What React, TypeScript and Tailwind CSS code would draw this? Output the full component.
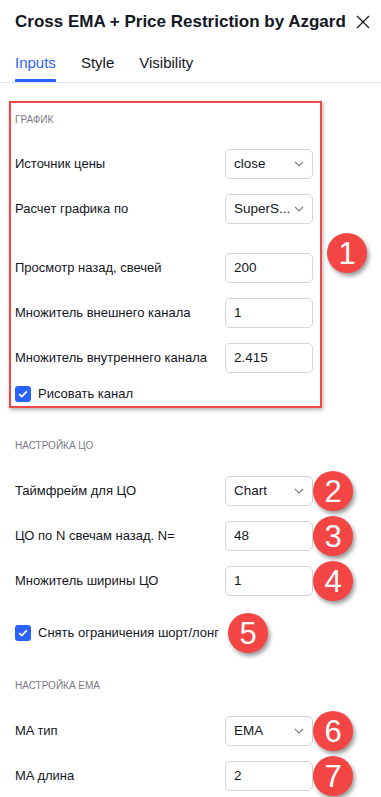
const font = { fontFamily: '"Liberation Sans", Arial, sans-serif' };

function Badge({ n, className }: { n: number; className: string }) {
  return (
    <div
      className={`absolute w-[40px] h-[40px] rounded-full bg-[#f44545] text-white flex items-center justify-center text-[31px] leading-none shadow-[2px_3px_4px_rgba(0,0,0,0.4)] z-10 ${className}`}
    >
      {n}
    </div>
  );
}

function Chevron() {
  return (
    <svg width="10" height="6" viewBox="0 0 10 6" className="text-[#787b86]">
      <path d="M1 1l4 4 4-4" fill="none" stroke="currentColor" strokeWidth="1.1" />
    </svg>
  );
}

function Field({ value, select }: { value: string; select?: boolean }) {
  return (
    <div className="w-[88px] h-[30px] border border-[#d1d4dc] rounded-[5px] flex items-center pl-[8px] pr-[8px] text-[13.5px] text-[#131722] bg-white">
      <span className="flex-1 truncate">{value}</span>
      {select && <Chevron />}
    </div>
  );
}

function Row({
  label,
  value,
  select,
  className = "",
  badge,
}: {
  label: string;
  value: string;
  select?: boolean;
  className?: string;
  badge?: number;
}) {
  return (
    <div className={`relative flex items-center justify-between h-[30px] w-[298px] ${className}`}>
      <span className="text-[13px] text-[#131722]">{label}</span>
      <Field value={value} select={select} />
      {badge && <Badge n={badge} className="left-[298px] top-1/2 -translate-y-1/2" />}
    </div>
  );
}

function Check({ label, className = "" }: { label: string; className?: string }) {
  return (
    <div className={`flex items-center h-[16px] ${className}`}>
      <div className="w-[16px] h-[16px] rounded-[3px] bg-[#2962ff] flex items-center justify-center">
        <svg width="10" height="8" viewBox="0 0 10 8">
          <path d="M1.2 4.2l2.6 2.4L8.8 1.4" fill="none" stroke="white" strokeWidth="1.8" />
        </svg>
      </div>
      <span className="ml-[7px] text-[13px] text-[#131722]">{label}</span>
    </div>
  );
}

function SectionTitle({ text, className = "" }: { text: string; className?: string }) {
  return (
    <div className={`h-[12px] leading-[12px] text-[10px] text-[#787b86] uppercase ${className}`}>
      {text}
    </div>
  );
}

export default function App() {
  return (
    <div className="w-[381px] h-[797px] bg-white overflow-hidden relative" style={font}>
      <div className="px-[15px]">
        <div className="mt-[10px] h-[24px] flex items-center justify-between">
          <h1 className="text-[17px] font-bold text-[#131722]">
            Cross EMA + Price Restriction by Azgard
          </h1>
          <svg width="14" height="14" viewBox="0 0 14 14" className="mr-[-4px]">
            <path d="M1 1l12 12M13 1L1 13" stroke="#131722" strokeWidth="1.2" />
          </svg>
        </div>
        <div className="mt-[10px] flex gap-[25px] h-[38px]">
          <div className="flex flex-col justify-between">
            <span className="text-[15px] text-[#2962ff] pt-[8px]">Inputs</span>
            <div className="h-[3px] bg-[#2962ff] rounded-t-[1px]" />
          </div>
          <span className="text-[15px] text-[#131722] pt-[8px]">Style</span>
          <span className="text-[15px] text-[#131722] pt-[8px]">Visibility</span>
        </div>
      </div>
      <div className="h-px bg-[#e0e3eb]" />

      <div className="px-[15px]">
        <div className="relative mt-[18px] ml-[-6px] w-[313px] border-2 border-[#f04848] pl-[4px] pr-[7px] pt-[11px] pb-[4px] shadow-[1px_2px_4px_rgba(0,0,0,0.3)]">
          <SectionTitle text="График" />
          <Row label="Источник цены" value="close" select className="mt-[23px]" />
          <Row label="Расчет графика по" value="SuperS..." select className="mt-[15px]" />
          <Row label="Просмотр назад, свечей" value="200" className="mt-[29px]" />
          <Row label="Множитель внешнего канала" value="1" className="mt-[15px]" />
          <Row label="Множитель внутреннего канала" value="2.415" className="mt-[15px]" />
          <Check label="Рисовать канал" className="mt-[13px]" />
          <Badge n={1} className="left-[316px] top-[130px]" />
        </div>

        <SectionTitle text="Настройка ЦО" className="mt-[32px]" />
        <Row label="Таймфрейм для ЦО" value="Chart" select className="mt-[24px]" badge={2} />
        <Row label="ЦО по N свечам назад. N=" value="48" className="mt-[15px]" badge={3} />
        <Row label="Множитель ширины ЦО" value="1" className="mt-[15px]" badge={4} />
        <div className="relative mt-[29px]">
          <Check label="Снять ограничения шорт/лонг" />
          <Badge n={5} className="left-[213px] top-1/2 -translate-y-1/2" />
        </div>

        <SectionTitle text="Настройка EMA" className="mt-[39px]" />
        <Row label="MA тип" value="EMA" select className="mt-[24px]" badge={6} />
        <Row label="MA длина" value="2" className="mt-[15px]" badge={7} />
      </div>
    </div>
  );
}
